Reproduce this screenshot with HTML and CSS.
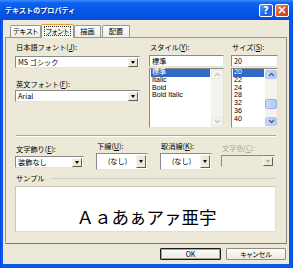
FILE: index.html
```html
<!DOCTYPE html>
<html lang="ja">
<head>
<meta charset="utf-8">
<title>テキストのプロパティ</title>
<link rel="stylesheet" href="styles.css">
</head>
<body>
<div class="window">
  <div class="titlebar">
    <span class="title">テキストのプロパティ</span>
    <div class="tbtns">
      <span class="tb help">?</span>
      <span class="tb close"><svg width="8" height="8" viewBox="0 0 8 8"><path d="M1 1L7 7M7 1L1 7" stroke="#fff" stroke-width="1.6" fill="none"/></svg></span>
    </div>
  </div>
  <div class="client">
    <div class="tabs">
      <span class="tab t1">テキスト</span>
      <span class="tab sel"><span class="focus">フォント</span></span>
      <span class="tab t3">描画</span>
      <span class="tab t4">配置</span>
    </div>
    <div class="panel">
      <div class="top">
        <div class="col">
          <div class="lbl">日本語フォント(<u>J</u>):</div>
          <div class="combo c1"><span class="val">MS ゴシック</span><span class="dd"><i></i></span></div>
          <div class="lbl lbl2">英文フォント(<u>F</u>):</div>
          <div class="combo"><span class="val">Arial</span><span class="dd"><i></i></span></div>
        </div>
        <div class="col">
          <div class="lbl">スタイル(<u>Y</u>):</div>
          <div class="edit">標準</div>
          <div class="list">
            <div class="items">
              <div class="item hl">標準</div>
              <div class="item">Italic</div>
              <div class="item">Bold</div>
              <div class="item">Bold Italic</div>
            </div>
            <div class="sb dis">
              <span class="sbb"><svg width="7" height="5" viewBox="0 0 7 5"><path d="M1 4L3.5 1.5L6 4" stroke="#C3C3BD" stroke-width="1.3" fill="none"/></svg></span>
              <span class="track"></span>
              <span class="sbb"><svg width="7" height="5" viewBox="0 0 7 5"><path d="M1 1L3.5 3.5L6 1" stroke="#C3C3BD" stroke-width="1.3" fill="none"/></svg></span>
            </div>
          </div>
        </div>
        <div class="col">
          <div class="lbl">サイズ(<u>S</u>):</div>
          <div class="edit">20</div>
          <div class="list">
            <div class="items">
              <div class="item hl">20</div>
              <div class="item">22</div>
              <div class="item">24</div>
              <div class="item">28</div>
              <div class="item">32</div>
              <div class="item">36</div>
              <div class="item">40</div>
            </div>
            <div class="sb act">
              <span class="sbb"><svg width="7" height="5" viewBox="0 0 7 5"><path d="M1 4L3.5 1.5L6 4" stroke="#4D6185" stroke-width="1.4" fill="none"/></svg></span>
              <span class="track"><span class="thumb"></span></span>
              <span class="sbb"><svg width="7" height="5" viewBox="0 0 7 5"><path d="M1 1L3.5 3.5L6 1" stroke="#4D6185" stroke-width="1.4" fill="none"/></svg></span>
            </div>
          </div>
        </div>
      </div>
      <div class="sep"></div>
      <div class="row4">
        <div class="fld f1">
          <div class="lbl">文字飾り(<u>E</u>):</div>
          <div class="combo"><span class="val">装飾なし</span><span class="dd"><i></i></span></div>
        </div>
        <div class="fld f2">
          <div class="lbl">下線(<u>U</u>):</div>
          <div class="combo tall"><span class="val c">(なし)</span><span class="dd"><i></i></span></div>
        </div>
        <div class="fld f3">
          <div class="lbl">取消線(<u>K</u>):</div>
          <div class="combo tall"><span class="val c">(なし)</span><span class="dd"><i></i></span></div>
        </div>
        <div class="fld f4">
          <div class="lbl gray">文字色(<u>C</u>):</div>
          <div class="combo disabled"><span class="val"></span><span class="dd"><i></i></span></div>
        </div>
      </div>
      <div class="group">
        <div class="legend"><span>サンプル</span></div>
        <div class="sample"><span>Ａａあぁアァ亜宇</span></div>
      </div>
    </div>
    <div class="buttons">
      <span class="btn def">OK</span>
      <span class="btn">キャンセル</span>
    </div>
  </div>
</div>
</body>
</html>
```

FILE: styles.css
```css
* { box-sizing: border-box; }
html, body { margin: 0; padding: 0; }
body {
  width: 293px; height: 268px; overflow: hidden;
  font-family: "Noto Sans CJK JP", "DejaVu Sans", sans-serif;
  font-size: 7.2px; color: #000;
}
u { text-decoration: underline; text-underline-offset: 1px; }
.window {
  width: 293px; height: 268px;
  background: linear-gradient(90deg, #0831D9 0, #0A5AE8 1px, #0A5AE8 calc(100% - 1px), #0831D9 100%);
  display: flex; flex-direction: column;
  padding: 0 4px 4px 3px;
}
.titlebar {
  height: 20px; margin: 0 -4px 0 -3px;
  background: linear-gradient(#3C8CFE 0%, #0F62F0 15%, #0758E8 50%, #0450E0 85%, #0A4BD4 100%);
  display: flex; align-items: center; padding: 0 4px 0 5px;
}
.title { color: #fff; font-weight: bold; font-size: 7.1px; text-shadow: 1px 1px 0 #0A2A8A; flex: 1; white-space: nowrap; }
.tbtns { display: flex; gap: 2px; }
.tb {
  width: 14px; height: 13px; border: 1px solid #fff; border-radius: 2px;
  display: flex; align-items: center; justify-content: center;
  color: #fff; font-weight: bold; font-size: 10px; font-family: "DejaVu Sans", sans-serif;
}
.help { background: linear-gradient(135deg, #5B9BFF, #1C5EE8 60%, #2A6AF0); }
.close { background: linear-gradient(135deg, #F08A68, #E0502A 55%, #C63C18); }
.client {
  flex: 1; background: #ECE9D8;
  display: flex; flex-direction: column;
  padding: 4px 2px 0 2px;
}
.tabs { display: flex; align-items: flex-end; height: 13px; padding-left: 5px; position: relative; z-index: 1; }
.tab {
  height: 12px; line-height: 10px; text-align: center; white-space: nowrap;
  font-feature-settings: "palt"; font-size: 7.2px;
  border: 1px solid #919B9C; border-bottom: none;
  background: linear-gradient(#FEFEFE, #F0EEE4);
  border-radius: 2px 2px 0 0;
}
.t1 { width: 31px; }
.t3 { width: 27px; }
.t4 { width: 28px; margin-left: 1px; }
.tab.sel {
  height: 14px; width: 33px; margin: 0 0 -1px 0; padding-top: 1px;
  background: #F6F5EE; border-top: 1px solid #E8A33C; line-height: 10px;
  position: relative; z-index: 2;
}
.focus { border: 1px dotted #333; padding: 0 1px; display: inline-block; line-height: 8px; }
.panel {
  height: 207px; background: #ECE9D8;
  border: 1px solid #919B9C; border-bottom-color: #7A7A72; border-right-color: #8A8A82;
  padding: 4px 0 0 9px;
  display: flex; flex-direction: column;
}
.top { display: flex; }
.col { display: flex; flex-direction: column; }
.col:nth-child(1) { width: 125px; }
.col:nth-child(2) { width: 75px; margin-left: 9px; }
.col:nth-child(3) { width: 47px; margin-left: 7px; }
.lbl { height: 13px; line-height: 11px; padding-left: 1px; white-space: nowrap; }
.lbl2 { margin-top: 12px; height: 10px; line-height: 9px; }
.gray { color: #ACA899; }
.combo {
  height: 12px; background: #fff;
  border: 1px solid; border-color: #8B8A86 #E6E4DA #E6E4DA #8B8A86;
  display: flex; align-items: center; padding: 0 1px 0 2px;
}
.combo.c1 { margin-top: 1px; }
.combo .val { flex: 1; white-space: nowrap; line-height: 9px; }
.combo .val.c { text-align: center; }
.dd {
  width: 10px; height: 9px; background: #ECE9D8;
  border: 1px solid; border-color: #F5F4EE #5F5E58 #5F5E58 #F5F4EE;
  display: flex; align-items: center; justify-content: center;
}
.dd i { width: 0; height: 0; border-left: 2.5px solid transparent; border-right: 2.5px solid transparent; border-top: 3px solid #000; }
.combo.tall { height: 17px; }
.combo.tall .dd { height: 13px; }
.combo.disabled { background: #ECE9D8; }
.combo.disabled .dd i { border-top-color: #ACA899; }
.edit {
  height: 12px; background: #fff; line-height: 10px; padding-left: 2px;
  border: 1px solid; border-color: #8B8A86 #E6E4DA #E6E4DA #8B8A86;
}
.list {
  height: 60px; margin-top: 1px; background: #fff; display: flex;
  border: 1px solid; border-color: #8B8A86 #E6E4DA #E6E4DA #8B8A86;
}
.items { flex: 1; padding: 0 1px 0 1px; }
.item {
  height: 7.8px; line-height: 7.8px; padding-left: 1px; white-space: nowrap;
  font-family: "Liberation Sans", "Noto Sans CJK JP", sans-serif; font-size: 7.1px;
}
.item.hl { background: #316AC5; color: #fff; }
.sb { width: 12px; display: flex; flex-direction: column; background: #F4F3EE; padding: 1px 0; }
.sbb { height: 9px; display: flex; align-items: center; justify-content: center; border-radius: 2px; }
.sb.dis .sbb { background: #F6F5F0; border: 1px solid #E8E6DE; }
.sb.act .sbb { background: linear-gradient(90deg, #C8D7FA, #B7CAF6); border: 1px solid #B3C6F0; }
.track { flex: 1; display: flex; flex-direction: column; padding-top: 20px; }
.thumb { height: 10px; background: linear-gradient(90deg, #C8D7FA, #B4C8F6); border: 1px solid #9DB4EC; border-radius: 2px; }
.sep { height: 2px; margin: 7px 10px 0 1px; border-top: 1px solid #ACA899; border-bottom: 1px solid #fff; }
.row4 { display: flex; margin-top: 4px; align-items: flex-end; }
.fld { display: flex; flex-direction: column; }
.fld .lbl { height: 12px; }
.f1 { width: 69px; }
.f1 .combo { margin-bottom: 2px; }
.f2 { width: 52px; margin-left: 12px; }
.f3 { width: 52px; margin-left: 12px; }
.f4 { width: 54px; margin-left: 9px; }
.f4 .combo { margin-bottom: 3px; }
.group { margin: 4px 10px 0 0; display: flex; flex-direction: column; }
.legend { height: 9px; display: flex; align-items: center; padding-left: 1px; }
.legend span { padding-right: 6px; line-height: 9px; }
.legend::after { content: ""; flex: 1; height: 1px; background: #D0D0BF; }
.sample {
  height: 46px; background: #fff; margin: 3px 0 0 0;
  border: 1px solid #C9C6B8; border-right-color: #E0DED3; border-bottom-color: #E0DED3;
  display: flex; justify-content: center; align-items: flex-end;
  padding-bottom: 3px;
}
.sample span { font-size: 17.5px; line-height: 22px; padding-left: 2px; }
.buttons { display: flex; justify-content: flex-end; gap: 5px; padding: 4px 1px 0 0; }
.btn {
  width: 60px; height: 12px; line-height: 10px; text-align: center; font-size: 7px;
  font-feature-settings: "palt";
  background: linear-gradient(#FBFBF8, #ECEBE4);
  border: 1px solid #8E8B80; border-radius: 1px;
}
.btn.def { width: 61px; border: 1px solid #1A1A1A; box-shadow: inset 0 0 0 1px #ACA899; }
```
